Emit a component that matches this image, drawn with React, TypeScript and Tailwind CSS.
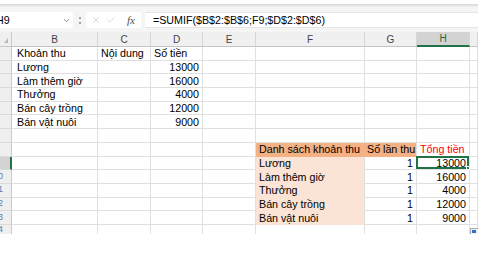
import React from 'react';
import clsx from 'clsx';
import { ChevronDown, X, Check } from 'lucide-react';

interface Column {
  key: string;
  w: string;
}
interface CellData {
  text?: string;
  right?: boolean;
  fill?: string;
  red?: boolean;
  pad?: string;
  selected?: boolean;
}
interface RowData {
  n: number;
  h: string;
  cells: Record<string, CellData>;
}

const COLS: Column[] = [
  { key: 'B', w: 'w-[86px]' },
  { key: 'C', w: 'w-[53px]' },
  { key: 'D', w: 'w-[52px]' },
  { key: 'E', w: 'w-[53px]' },
  { key: 'F', w: 'w-[109px]' },
  { key: 'G', w: 'w-[52px]' },
  { key: 'H', w: 'w-[53px]' },
  { key: 'I', w: 'w-[8px]' },
];

const PEACH = 'bg-[#fbe3d5] border-b-[#fbe3d5]';
const ORANGE = 'bg-[#f4b183] border-b-[#f4b183]';

const income = [
  ['Lương', '13000'],
  ['Làm thêm giờ', '16000'],
  ['Thưởng', '4000'],
  ['Bán cây trồng', '12000'],
  ['Bán vật nuôi', '9000'],
];

const ROWS: RowData[] = [
  {
    n: 1,
    h: 'h-[13.7px]',
    cells: {
      B: { text: 'Khoản thu', pad: 'pl-[5px]' },
      C: { text: 'Nội dung' },
      D: { text: 'Số tiền' },
    },
  },
  ...income.map(([name, amount], i) => ({
    n: i + 2,
    h: 'h-[13.7px]',
    cells: {
      B: { text: name, pad: 'pl-[5px]' },
      D: { text: amount, right: true },
    },
  })),
  { n: 7, h: 'h-[13.7px]', cells: {} },
  {
    n: 8,
    h: 'h-[13.7px]',
    cells: {
      F: { text: 'Danh sách khoản thu', fill: ORANGE + ' border-r-[#f4b183]' },
      G: { text: 'Số lần thu', fill: ORANGE, pad: 'pl-[2px]' },
      H: { text: 'Tổng tiền', red: true },
    },
  },
  ...income.map(([name, amount], i) => ({
    n: i + 9,
    h: 'h-[13.7px]',
    cells: {
      F: { text: name, fill: PEACH },
      G: { text: '1', right: true },
      H: { text: amount, right: true, selected: i === 0 },
    },
  })),
  { n: 14, h: 'h-[9px]', cells: {} },
];

function FormulaBar() {
  return (
    <div className="flex h-[25px] items-start bg-[#f5f5f5] pt-[5px]">
      <div className="flex h-[16px] w-[73px] items-center justify-between overflow-hidden rounded-r-[3px] bg-white pr-[2px]">
        <span className="-ml-[4px] text-[10.7px] text-black">H9</span>
        <ChevronDown size={9} color="#6b6b6b" strokeWidth={2} />
      </div>
      <div className="flex h-[16px] w-[13px] flex-col items-center justify-center gap-[3px]">
        <span className="h-[2px] w-[2px] rounded-full bg-[#8a8a8a]" />
        <span className="h-[2px] w-[2px] rounded-full bg-[#8a8a8a]" />
      </div>
      <div className="flex h-[16px] w-[55px] items-center rounded-[3px] bg-white pl-[5px]">
        <X size={10} color="#c2c2c2" strokeWidth={1.5} />
        <Check size={10} color="#c2c2c2" strokeWidth={1.5} className="ml-[5px]" />
        <span className="ml-[11px] font-['Liberation_Serif',serif] text-[11px] italic text-[#505050]">
          fx
        </span>
      </div>
      <div className="ml-[4px] flex h-[16px] flex-1 items-center border-y border-[#e4e4e4] bg-white pl-[8px] text-[10.7px] text-black">
        =SUMIF($B$2:$B$6;F9;$D$2:$D$6)
      </div>
    </div>
  );
}

function HeaderRow() {
  return (
    <div className="flex h-[15px]">
      <div className="flex w-[12px] shrink-0 items-end justify-end border-r border-b border-[#c9c9c9] bg-[#efefef] pr-[3px] pb-[3px]">
        <svg width="4" height="5" viewBox="0 0 4 5">
          <polygon points="4,0 4,5 0,5" fill="#b9b9b9" />
        </svg>
      </div>
      {COLS.map((c) => (
        <div
          key={c.key}
          className={clsx(
            'flex shrink-0 items-center justify-center border-r border-[#d6d6d6] text-[10px]',
            c.w,
            c.key === 'H'
              ? 'border-b-2 border-b-[#217346] bg-[#d3d3d3] text-[#1d6b3c]'
              : 'border-b border-b-[#c4c4c4] bg-[#f0f0f0] text-[#444]',
          )}
        >
          {c.key === 'I' ? '' : c.key}
        </div>
      ))}
    </div>
  );
}

function SheetRow({ row, last }: { row: RowData; last: boolean }) {
  const active = row.n === 9;
  return (
    <div className={clsx('flex', row.h)}>
      <div
        className={clsx(
          'flex w-[12px] shrink-0 items-center justify-end overflow-hidden pr-[8px] text-[9px] text-[#5a7fb5]',
          active
            ? 'border-r-2 border-r-[#217346] bg-[#d3d3d3]'
            : 'border-r border-r-[#c9c9c9] bg-[#efefef]',
          !last && 'border-b border-b-[#d9d9d9]',
        )}
      >
        {row.n >= 10 ? row.n : ''}
      </div>
      {COLS.map((c) => {
        const cell = row.cells[c.key] ?? {};
        return (
          <div
            key={c.key}
            className={clsx(
              'relative flex shrink-0 items-center whitespace-nowrap border-r border-[#e0e0e0] text-[10.7px]',
              c.w,
              !last && 'border-b',
              cell.right ? 'justify-end pr-[3px]' : cell.pad ?? 'pl-[3px]',
              cell.fill,
              cell.red ? 'text-[#ff0000]' : 'text-black',
            )}
          >
            {cell.text}
            {cell.selected && (
              <div className="absolute -top-[1px] -left-[1px] right-0 bottom-0 border-2 border-[#217346]">
                <span className="absolute -right-[3px] -bottom-[3px] h-[4px] w-[4px] border border-white bg-[#217346]" />
              </div>
            )}
          </div>
        );
      })}
    </div>
  );
}

export default function App() {
  return (
    <div className="h-[275px] w-[489px] overflow-hidden bg-white font-['Liberation_Sans',Arial,sans-serif]">
      <div className="w-[478px] overflow-hidden">
        <div className="h-[4px] bg-white" />
        <div className="h-[3px] bg-linear-to-b from-[#d6d6d6] to-[#f3f3f3]" />
        <FormulaBar />
        <HeaderRow />
        <div className="relative">
          {ROWS.map((row, i) => (
            <SheetRow key={row.n} row={row} last={i === ROWS.length - 1} />
          ))}
          <div className="absolute top-[181px] left-[470px] flex h-[8px] w-[10px] items-start border border-[#a8a8a8] bg-[#f3f3f3] p-[1px]">
            <span className="h-[3px] w-[4px] bg-[#2f6fc9]" />
          </div>
        </div>
      </div>
    </div>
  );
}
